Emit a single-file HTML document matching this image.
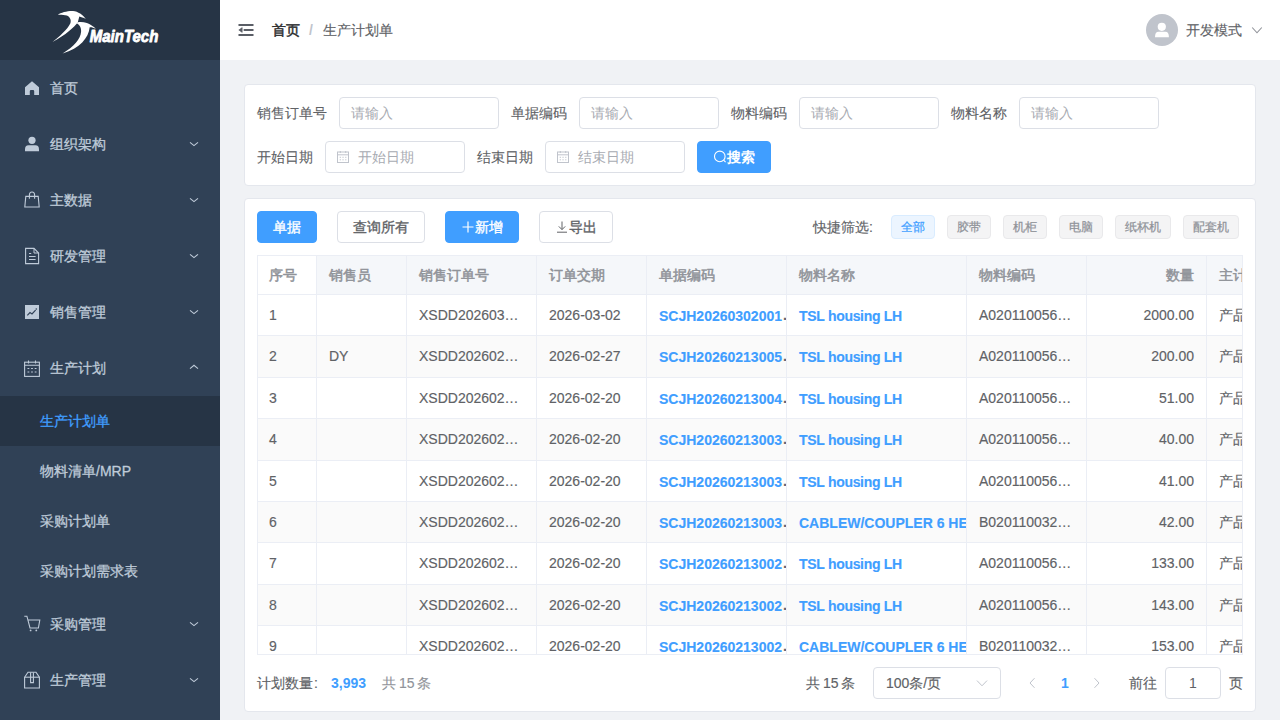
<!DOCTYPE html>
<html><head><meta charset="utf-8">
<style>
*{box-sizing:border-box;margin:0;padding:0}
html,body{width:1280px;height:720px;overflow:hidden;font-family:"Liberation Sans",sans-serif;font-size:14px;color:#606266;background:#f0f2f5}
.abs{position:absolute}
#side{position:absolute;left:0;top:0;width:220px;height:720px;background:#304156;overflow:hidden}
#logo{position:absolute;left:0;top:0;width:220px;height:60px;background:#263445}
.mi{position:absolute;left:0;width:220px;height:56px;color:#bfcbd9;font-size:14px}
.mi .tx{position:absolute;left:50px;top:0;line-height:56px;-webkit-text-stroke:0.3px}
.sub{position:absolute;left:0;width:220px;height:50px;color:#bfcbd9}
.sub .tx{position:absolute;left:40px;line-height:50px;-webkit-text-stroke:0.3px}
.sub.act{background:#263445;color:#409eff}
.st1{-webkit-text-stroke:0.15px}
#hdr{position:absolute;left:220px;top:0;width:1060px;height:60px;background:#fff}
.card{position:absolute;left:244px;width:1012px;background:#fff;border:1px solid #e4e7ed;border-radius:4px}
.lbl{position:absolute;color:#606266;font-size:14px;line-height:32px;-webkit-text-stroke:0.1px}
.inp{position:absolute;height:32px;border:1px solid #dcdfe6;border-radius:4px;background:#fff;color:#a8abb2;line-height:30px;padding-left:11px}
.btn{position:absolute;height:32px;border-radius:4px;line-height:30px;text-align:center;font-size:14px}
.bp{background:#409eff;color:#fff;border:1px solid #409eff}
.bd{background:#fff;color:#606266;border:1px solid #dcdfe6}
.tag{position:absolute;top:215px;height:24px;border-radius:4px;background:#f4f4f5;border:1px solid #e9e9eb;color:#909399;font-size:12px;line-height:22px;text-align:center;-webkit-text-stroke:0.25px}
.med{-webkit-text-stroke:0.35px}
#tbl{position:absolute;left:257px;top:255px;width:986px;height:400px;overflow:hidden;border:1px solid #ebeef5}
.hrow{position:absolute;left:0;top:0;width:986px;height:39px;background:#f5f7fa;border-bottom:1px solid #ebeef5}
.hc{position:absolute;top:0;height:38px;line-height:38px;padding:0 12px;color:#909399;-webkit-text-stroke:0.5px;border-right:1px solid #ebeef5;white-space:nowrap;overflow:hidden}
.hc.w{background:#fff}
.row{position:absolute;left:0;width:986px;height:41.375px;background:#fff;border-bottom:1px solid #ebeef5}
.row.st{background:#fafafa}
.c{position:absolute;top:0;height:40.375px;line-height:40px;padding:0 12px;color:#606266;border-right:1px solid #ebeef5;white-space:nowrap;overflow:hidden}
.r{text-align:right}
.c0{padding-left:11px}
.lk{color:#409eff;font-weight:bold;padding-right:0}
.lk b{position:relative;top:1px;font-weight:bold}
.dot{position:absolute;top:0;line-height:40px;color:#606266}
</style></head><body>
<div id="side">
<div id="logo"><svg class="abs" style="left:0;top:0" width="220" height="60" viewBox="0 0 220 60">
<path d="M57.7 14.9C61 12.5 68 10.8 73 11.1C78 11.5 83 15 85.8 19.1C83.5 17.8 81 17 79.3 16.6L77.9 21.9C74 27.5 66 34.5 52.5 42C60 36 67 30 70.4 23.3C71.5 20 70 17 66.8 15.6C64 14.8 60 14.8 57.7 14.9Z" fill="#fff"/>
<path d="M75.8 22.9C78 21.6 83 21.6 86.9 22.9C90 24 93.5 26.3 95.9 28.8C93.5 27.6 91.5 27 89.7 27.2C88.5 38 80 48 62.6 53.5C74 46.5 80.5 39.5 81.1 31.6C81.4 27.5 79.5 24 75.8 22.9Z" fill="#fff"/>
<text x="89.8" y="42.3" font-family="Liberation Sans" font-weight="bold" font-style="italic" font-size="16" fill="#fff" stroke="#fff" stroke-width="0.8" stroke-linejoin="round" textLength="68.5" lengthAdjust="spacingAndGlyphs">MainTech</text>
</svg></div>
<div class="mi st1" style="top:60px"><span class="tx">首页</span></div><svg class="abs" style="left:24px;top:80px" width="16" height="16" viewBox="0 0 16 16"><path d="M1 7.2L8 1.2L15 7.2V15H10.2V11.2Q10.2 10 9 10H7Q5.8 10 5.8 11.2V15H1Z" fill="#bfcbd9"/></svg>
<div class="mi st1" style="top:116px"><span class="tx">组织架构</span></div><svg class="abs" style="left:24px;top:136px" width="16" height="16" viewBox="0 0 16 16"><circle cx="8" cy="4.3" r="3.6" fill="#bfcbd9"/><path d="M1 13.2Q1 9.3 4.6 9.3H11.4Q15 9.3 15 13.2V15.2H1Z" fill="#bfcbd9"/></svg><svg class="abs" style="left:188px;top:140px" width="12" height="8" viewBox="0 0 12 8"><path d="M2 2.3L6 5.6L10 2.3" fill="none" stroke="#bfcbd9" stroke-width="1.1"/></svg>
<div class="mi st1" style="top:172px"><span class="tx">主数据</span></div><svg class="abs" style="left:24px;top:190px" width="16" height="18" viewBox="0 0 16 18"><path d="M1.8 6.4H14.2L15.2 17H0.8Z" fill="none" stroke="#bfcbd9" stroke-width="1.1"/><path d="M5.4 8.8V5Q5.4 2 8 2Q10.6 2 10.6 5V8.8" fill="none" stroke="#bfcbd9" stroke-width="1.1"/></svg><svg class="abs" style="left:188px;top:196px" width="12" height="8" viewBox="0 0 12 8"><path d="M2 2.3L6 5.6L10 2.3" fill="none" stroke="#bfcbd9" stroke-width="1.1"/></svg>
<div class="mi st1" style="top:228px"><span class="tx">研发管理</span></div><svg class="abs" style="left:24px;top:247px" width="16" height="18" viewBox="0 0 16 18"><path d="M1.6 1.4H10L14.6 6V16.6H1.6Z" fill="none" stroke="#bfcbd9" stroke-width="1.1"/><path d="M10 1.4V6H14.6" fill="none" stroke="#bfcbd9" stroke-width="1"/><path d="M5 6.5H7.2M5 9.5H11.6M5 12.5H11.6" stroke="#bfcbd9" stroke-width="1.1"/></svg><svg class="abs" style="left:188px;top:252px" width="12" height="8" viewBox="0 0 12 8"><path d="M2 2.3L6 5.6L10 2.3" fill="none" stroke="#bfcbd9" stroke-width="1.1"/></svg>
<div class="mi st1" style="top:284px"><span class="tx">销售管理</span></div><svg class="abs" style="left:24px;top:304px" width="16" height="16" viewBox="0 0 16 16"><rect x="1" y="1" width="14" height="14" fill="#bfcbd9"/><path d="M3.3 11.3L6 8.6L8 10L11.6 6.2" fill="none" stroke="#304156" stroke-width="1.2"/><circle cx="12.3" cy="5" r="0.8" fill="#304156"/></svg><svg class="abs" style="left:188px;top:308px" width="12" height="8" viewBox="0 0 12 8"><path d="M2 2.3L6 5.6L10 2.3" fill="none" stroke="#bfcbd9" stroke-width="1.1"/></svg>
<div class="mi st1" style="top:340px"><span class="tx">生产计划</span></div><svg class="abs" style="left:24px;top:360px" width="16" height="17" viewBox="0 0 16 17"><rect x="0.6" y="2.2" width="14.8" height="14.2" fill="none" stroke="#bfcbd9" stroke-width="1.1"/><path d="M0.6 5.2H15.4M4.5 0.5V3.5M11.5 0.5V3.5" stroke="#bfcbd9" stroke-width="1.1"/><path d="M3.5 8.5H5.3M7.1 8.5H8.9M10.7 8.5H12.5M3.5 12H5.3M7.1 12H8.9M10.7 12H12.5" stroke="#bfcbd9" stroke-width="1.2"/></svg><svg class="abs" style="left:188px;top:363px" width="12" height="8" viewBox="0 0 12 8"><path d="M2 5.6L6 2.3L10 5.6" fill="none" stroke="#bfcbd9" stroke-width="1.1"/></svg>
<div class="mi st1" style="top:596px"><span class="tx">采购管理</span></div><svg class="abs" style="left:24px;top:615px" width="17" height="17" viewBox="0 0 17 17"><path d="M0.3 1.2H2.9L6 13H14.4L15.8 5H4.2" fill="none" stroke="#bfcbd9" stroke-width="1.1"/><circle cx="6.6" cy="15.4" r="0.9" fill="#bfcbd9"/><circle cx="12.3" cy="15.4" r="0.9" fill="#bfcbd9"/></svg><svg class="abs" style="left:188px;top:620px" width="12" height="8" viewBox="0 0 12 8"><path d="M2 2.3L6 5.6L10 2.3" fill="none" stroke="#bfcbd9" stroke-width="1.1"/></svg>
<div class="mi st1" style="top:652px"><span class="tx">生产管理</span></div><svg class="abs" style="left:24px;top:671px" width="17" height="18" viewBox="0 0 17 18"><path d="M0.6 6.2L4 1.2H12L15.4 6.2V17H0.6Z" fill="none" stroke="#bfcbd9" stroke-width="1.1"/><path d="M0.6 6.2H15.4" stroke="#bfcbd9" stroke-width="1.1"/><path d="M6.6 1.4V11.6H9.4V1.4" fill="none" stroke="#bfcbd9" stroke-width="1.1"/></svg><svg class="abs" style="left:188px;top:676px" width="12" height="8" viewBox="0 0 12 8"><path d="M2 2.3L6 5.6L10 2.3" fill="none" stroke="#bfcbd9" stroke-width="1.1"/></svg>
<div class="sub st1 act" style="top:396px"><span class="tx">生产计划单</span></div>
<div class="sub st1" style="top:446px"><span class="tx">物料清单/MRP</span></div>
<div class="sub st1" style="top:496px"><span class="tx">采购计划单</span></div>
<div class="sub st1" style="top:546px"><span class="tx">采购计划需求表</span></div>
</div>
<div id="hdr">
<svg class="abs" style="left:17px;top:22px" width="18" height="16" viewBox="0 0 18 16"><path d="M2.2 3H15.8M7.4 8H15.8M2.2 13H15.8" stroke="#5a5e66" stroke-width="1.9" stroke-linecap="round"/><path d="M1.8 8L5.2 5.6V10.4Z" fill="#5a5e66" stroke="#5a5e66" stroke-width="0.6" stroke-linejoin="round"/></svg>
<span class="abs" style="left:52px;top:0;line-height:60px;color:#303133;-webkit-text-stroke:0.5px">首页</span>
<span class="abs" style="left:89px;top:0;line-height:60px;color:#c0c4cc;font-weight:bold">/</span>
<span class="abs st1" style="left:103px;top:0;line-height:60px;color:#606266">生产计划单</span>
<div class="abs" style="left:926px;top:14px;width:32px;height:32px;border-radius:50%;background:#c0c4cc"></div>
<svg class="abs" style="left:926px;top:14px" width="32" height="32" viewBox="0 0 32 32"><circle cx="15.8" cy="12.8" r="4.1" fill="#fff"/><path d="M9 23.2Q9 17.8 12.5 17.8H19.4Q22.9 17.8 22.9 23.2Z" fill="#fff"/></svg>
<span class="abs st1" style="left:966px;top:0;line-height:60px;color:#606266">开发模式</span>
<svg class="abs" style="left:1030px;top:24px" width="14" height="12" viewBox="0 0 14 12"><path d="M2.2 3.5L7 8.8L11.8 3.5" fill="none" stroke="#909399" stroke-width="1.1"/></svg>
</div>
<div class="card" style="top:84px;height:102px"></div>
<span class="lbl" style="left:257px;top:97px">销售订单号</span>
<div class="inp" style="left:339px;top:97px;width:160px">请输入</div>
<span class="lbl" style="left:511px;top:97px">单据编码</span>
<div class="inp" style="left:579px;top:97px;width:140px">请输入</div>
<span class="lbl" style="left:731px;top:97px">物料编码</span>
<div class="inp" style="left:799px;top:97px;width:140px">请输入</div>
<span class="lbl" style="left:951px;top:97px">物料名称</span>
<div class="inp" style="left:1019px;top:97px;width:140px">请输入</div>
<span class="lbl" style="left:257px;top:141px">开始日期</span>
<div class="inp" style="left:325px;top:141px;width:140px;padding-left:32px">开始日期</div>
<svg class="abs" style="left:336px;top:150px" width="14" height="14" viewBox="0 0 14 14"><rect x="1.5" y="2" width="11" height="10.5" fill="none" stroke="#c0c4cc" stroke-width="1"/><path d="M1.5 4.8H12.5M4.3 1V3M9.7 1V3" stroke="#c0c4cc" stroke-width="1"/><path d="M3.7 7.3H5M6.4 7.3H7.7M9.1 7.3H10.4M3.7 9.8H5M6.4 9.8H7.7M9.1 9.8H10.4" stroke="#c0c4cc" stroke-width="0.9"/></svg>
<span class="lbl" style="left:477px;top:141px">结束日期</span>
<div class="inp" style="left:545px;top:141px;width:140px;padding-left:32px">结束日期</div>
<svg class="abs" style="left:556px;top:150px" width="14" height="14" viewBox="0 0 14 14"><rect x="1.5" y="2" width="11" height="10.5" fill="none" stroke="#c0c4cc" stroke-width="1"/><path d="M1.5 4.8H12.5M4.3 1V3M9.7 1V3" stroke="#c0c4cc" stroke-width="1"/><path d="M3.7 7.3H5M6.4 7.3H7.7M9.1 7.3H10.4M3.7 9.8H5M6.4 9.8H7.7M9.1 9.8H10.4" stroke="#c0c4cc" stroke-width="0.9"/></svg>
<div class="btn bp" style="left:697px;top:141px;width:74px;font-weight:bold;padding-left:14px">搜索</div>
<svg class="abs" style="left:712px;top:149px" width="16" height="16" viewBox="0 0 16 16"><circle cx="7.8" cy="7.4" r="5.3" fill="none" stroke="#fff" stroke-width="1.1"/><path d="M11.6 11.2L13.6 13.2" stroke="#fff" stroke-width="1.1"/></svg>
<div class="card" style="top:198px;height:514px"></div>
<div class="btn bp med" style="left:257px;top:211px;width:60px">单据</div>
<div class="btn bd med" style="left:337px;top:211px;width:88px">查询所有</div>
<div class="btn bp med" style="left:445px;top:211px;width:74px;padding-left:14px">新增</div>
<svg class="abs" style="left:461px;top:220px" width="14" height="14" viewBox="0 0 14 14"><path d="M7 1.5V12.5M1.5 7H12.5" stroke="#fff" stroke-width="1.2"/></svg>
<div class="btn bd med" style="left:539px;top:211px;width:74px;padding-left:14px">导出</div>
<svg class="abs" style="left:555px;top:220px" width="14" height="14" viewBox="0 0 14 14"><path d="M7 1.5V9.5M3.8 6.4L7 9.6L10.2 6.4M2 12.2H12" fill="none" stroke="#606266" stroke-width="1"/></svg>
<span class="abs st1" style="left:813px;top:211px;line-height:32px;color:#606266">快捷筛选:</span>
<div class="tag" style="left:891px;width:44px;background:#ecf5ff;border-color:#d9ecff;color:#409eff">全部</div>
<div class="tag" style="left:947px;width:44px">胶带</div>
<div class="tag" style="left:1003px;width:44px">机柜</div>
<div class="tag" style="left:1059px;width:44px">电脑</div>
<div class="tag" style="left:1115px;width:56px">纸杯机</div>
<div class="tag" style="left:1183px;width:56px">配套机</div>
<div id="tbl">
<div class="hrow"><div class="hc w c0" style="left:0px;width:59px">序号</div><div class="hc" style="left:59px;width:90px">销售员</div><div class="hc" style="left:149px;width:130px">销售订单号</div><div class="hc" style="left:279px;width:110px">订单交期</div><div class="hc" style="left:389px;width:140px">单据编码</div><div class="hc" style="left:529px;width:180px">物料名称</div><div class="hc" style="left:709px;width:120px">物料编码</div><div class="hc r" style="left:829px;width:120px">数量</div><div class="hc" style="left:949px;width:40px">主计划</div></div>
<div class="row" style="top:39.0px"><div class="c st1 c0" style="left:0px;width:59px">1</div><div class="c st1" style="left:59px;width:90px"></div><div class="c st1" style="left:149px;width:130px">XSDD202603…</div><div class="c st1" style="left:279px;width:110px">2026-03-02</div><div class="c st1 lk" style="left:389px;width:140px"><b>SCJH20260302001</b><span class="dot" style="left:135.5px">…</span></div><div class="c st1 lk" style="left:529px;width:180px"><b style="letter-spacing:-0.3px">TSL housing LH</b></div><div class="c st1" style="left:709px;width:120px">A020110056…</div><div class="c st1 r" style="left:829px;width:120px">2000.00</div><div class="c st1" style="left:949px;width:40px">产品</div></div>
<div class="row st" style="top:80.375px"><div class="c st1 c0" style="left:0px;width:59px">2</div><div class="c st1" style="left:59px;width:90px">DY</div><div class="c st1" style="left:149px;width:130px">XSDD202602…</div><div class="c st1" style="left:279px;width:110px">2026-02-27</div><div class="c st1 lk" style="left:389px;width:140px"><b>SCJH20260213005</b><span class="dot" style="left:135.5px">…</span></div><div class="c st1 lk" style="left:529px;width:180px"><b style="letter-spacing:-0.3px">TSL housing LH</b></div><div class="c st1" style="left:709px;width:120px">A020110056…</div><div class="c st1 r" style="left:829px;width:120px">200.00</div><div class="c st1" style="left:949px;width:40px">产品</div></div>
<div class="row" style="top:121.75px"><div class="c st1 c0" style="left:0px;width:59px">3</div><div class="c st1" style="left:59px;width:90px"></div><div class="c st1" style="left:149px;width:130px">XSDD202602…</div><div class="c st1" style="left:279px;width:110px">2026-02-20</div><div class="c st1 lk" style="left:389px;width:140px"><b>SCJH20260213004</b><span class="dot" style="left:135.5px">…</span></div><div class="c st1 lk" style="left:529px;width:180px"><b style="letter-spacing:-0.3px">TSL housing LH</b></div><div class="c st1" style="left:709px;width:120px">A020110056…</div><div class="c st1 r" style="left:829px;width:120px">51.00</div><div class="c st1" style="left:949px;width:40px">产品</div></div>
<div class="row st" style="top:163.125px"><div class="c st1 c0" style="left:0px;width:59px">4</div><div class="c st1" style="left:59px;width:90px"></div><div class="c st1" style="left:149px;width:130px">XSDD202602…</div><div class="c st1" style="left:279px;width:110px">2026-02-20</div><div class="c st1 lk" style="left:389px;width:140px"><b>SCJH20260213003</b><span class="dot" style="left:135.5px">…</span></div><div class="c st1 lk" style="left:529px;width:180px"><b style="letter-spacing:-0.3px">TSL housing LH</b></div><div class="c st1" style="left:709px;width:120px">A020110056…</div><div class="c st1 r" style="left:829px;width:120px">40.00</div><div class="c st1" style="left:949px;width:40px">产品</div></div>
<div class="row" style="top:204.5px"><div class="c st1 c0" style="left:0px;width:59px">5</div><div class="c st1" style="left:59px;width:90px"></div><div class="c st1" style="left:149px;width:130px">XSDD202602…</div><div class="c st1" style="left:279px;width:110px">2026-02-20</div><div class="c st1 lk" style="left:389px;width:140px"><b>SCJH20260213003</b><span class="dot" style="left:135.5px">…</span></div><div class="c st1 lk" style="left:529px;width:180px"><b style="letter-spacing:-0.3px">TSL housing LH</b></div><div class="c st1" style="left:709px;width:120px">A020110056…</div><div class="c st1 r" style="left:829px;width:120px">41.00</div><div class="c st1" style="left:949px;width:40px">产品</div></div>
<div class="row st" style="top:245.875px"><div class="c st1 c0" style="left:0px;width:59px">6</div><div class="c st1" style="left:59px;width:90px"></div><div class="c st1" style="left:149px;width:130px">XSDD202602…</div><div class="c st1" style="left:279px;width:110px">2026-02-20</div><div class="c st1 lk" style="left:389px;width:140px"><b>SCJH20260213003</b><span class="dot" style="left:135.5px">…</span></div><div class="c st1 lk" style="left:529px;width:180px"><b>CABLEW/COUPLER 6 HEAD</b></div><div class="c st1" style="left:709px;width:120px">B020110032…</div><div class="c st1 r" style="left:829px;width:120px">42.00</div><div class="c st1" style="left:949px;width:40px">产品</div></div>
<div class="row" style="top:287.25px"><div class="c st1 c0" style="left:0px;width:59px">7</div><div class="c st1" style="left:59px;width:90px"></div><div class="c st1" style="left:149px;width:130px">XSDD202602…</div><div class="c st1" style="left:279px;width:110px">2026-02-20</div><div class="c st1 lk" style="left:389px;width:140px"><b>SCJH20260213002</b><span class="dot" style="left:135.5px">…</span></div><div class="c st1 lk" style="left:529px;width:180px"><b style="letter-spacing:-0.3px">TSL housing LH</b></div><div class="c st1" style="left:709px;width:120px">A020110056…</div><div class="c st1 r" style="left:829px;width:120px">133.00</div><div class="c st1" style="left:949px;width:40px">产品</div></div>
<div class="row st" style="top:328.625px"><div class="c st1 c0" style="left:0px;width:59px">8</div><div class="c st1" style="left:59px;width:90px"></div><div class="c st1" style="left:149px;width:130px">XSDD202602…</div><div class="c st1" style="left:279px;width:110px">2026-02-20</div><div class="c st1 lk" style="left:389px;width:140px"><b>SCJH20260213002</b><span class="dot" style="left:135.5px">…</span></div><div class="c st1 lk" style="left:529px;width:180px"><b style="letter-spacing:-0.3px">TSL housing LH</b></div><div class="c st1" style="left:709px;width:120px">A020110056…</div><div class="c st1 r" style="left:829px;width:120px">143.00</div><div class="c st1" style="left:949px;width:40px">产品</div></div>
<div class="row" style="top:370.0px"><div class="c st1 c0" style="left:0px;width:59px">9</div><div class="c st1" style="left:59px;width:90px"></div><div class="c st1" style="left:149px;width:130px">XSDD202602…</div><div class="c st1" style="left:279px;width:110px">2026-02-20</div><div class="c st1 lk" style="left:389px;width:140px"><b>SCJH20260213002</b><span class="dot" style="left:135.5px">…</span></div><div class="c st1 lk" style="left:529px;width:180px"><b>CABLEW/COUPLER 6 HEAD</b></div><div class="c st1" style="left:709px;width:120px">B020110032…</div><div class="c st1 r" style="left:829px;width:120px">153.00</div><div class="c st1" style="left:949px;width:40px">产品</div></div>
</div>
<span class="abs st1" style="left:257px;top:667px;line-height:32px;color:#606266">计划数量</span><span class="abs st1" style="left:314px;top:667px;line-height:32px;color:#606266">:</span>
<span class="abs" style="left:331px;top:667px;line-height:32px;color:#409eff;font-weight:bold">3,993</span>
<span class="abs st1" style="left:382px;top:667px;line-height:32px;color:#909399;word-spacing:-1px">共 15 条</span>
<span class="abs st1" style="left:806px;top:667px;line-height:32px;color:#606266;word-spacing:-1px">共 15 条</span>
<div class="inp st1" style="left:873px;top:667px;width:128px;color:#606266;padding-left:12px">100条/页</div>
<svg class="abs" style="left:975px;top:677px" width="14" height="12" viewBox="0 0 14 12"><path d="M2 3.6L7 8.8L12 3.6" fill="none" stroke="#c0c4cc" stroke-width="1"/></svg>
<svg class="abs" style="left:1026px;top:677px" width="12" height="12" viewBox="0 0 12 12"><path d="M8.5 1.2L4 6L8.5 10.8" fill="none" stroke="#c0c4cc" stroke-width="1"/></svg>
<span class="abs" style="left:1061px;top:667px;line-height:32px;color:#409eff;font-weight:bold">1</span>
<svg class="abs" style="left:1091px;top:677px" width="12" height="12" viewBox="0 0 12 12"><path d="M3.5 1.2L8 6L3.5 10.8" fill="none" stroke="#c0c4cc" stroke-width="1"/></svg>
<span class="abs st1" style="left:1129px;top:667px;line-height:32px;color:#606266">前往</span>
<div class="inp" style="left:1165px;top:667px;width:56px;color:#606266;padding:0;text-align:center">1</div>
<span class="abs st1" style="left:1229px;top:667px;line-height:32px;color:#606266">页</span>
</body></html>
